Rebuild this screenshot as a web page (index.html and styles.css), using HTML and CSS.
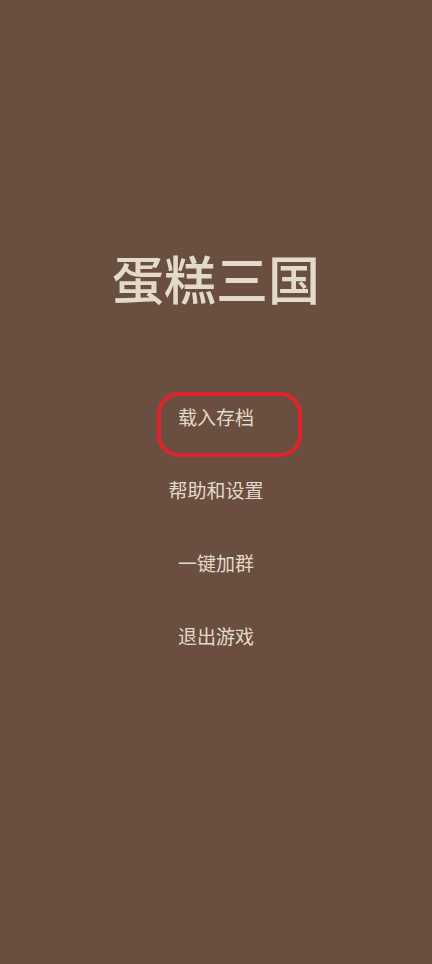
FILE: index.html
```html
<!DOCTYPE html>
<html lang="zh-CN">
<head>
    <meta charset="UTF-8">
    <title>蛋糕三国</title>
    <link rel="stylesheet" href="styles.css">
</head>
<body>
    <div class="screen">
        <h1 class="title">蛋糕三国</h1>
        <ul class="menu">
            <li class="menu-item marked">载入存档</li>
            <li class="menu-item">帮助和设置</li>
            <li class="menu-item">一键加群</li>
            <li class="menu-item">退出游戏</li>
        </ul>
    </div>
</body>
</html>
```

FILE: styles.css
```css
*, *::before, *::after {
    box-sizing: border-box;
    margin: 0;
    padding: 0;
}

body, html {
    width: 100%;
    height: 100%;
    background: #6a4f41;
}

.screen {
    height: 100%;
    padding-top: 248px;
    font-family: "Noto Sans CJK SC", "Noto Sans", sans-serif;
    color: #e2dacb;
    text-align: center;
}

.title {
    font-size: 52px;
    line-height: 60px;
    font-weight: 500;
}

.menu {
    list-style: none;
    margin-top: 72px;
}

.menu-item {
    font-size: 19px;
    line-height: 73px;
    position: relative;
}

/* red circle drawn over the first entry */
.marked::after {
    content: "";
    position: absolute;
    left: 157px;
    top: 12px;
    width: 145px;
    height: 65px;
    border: 4px solid #e0232c;
    border-radius: 22px;
}
```
